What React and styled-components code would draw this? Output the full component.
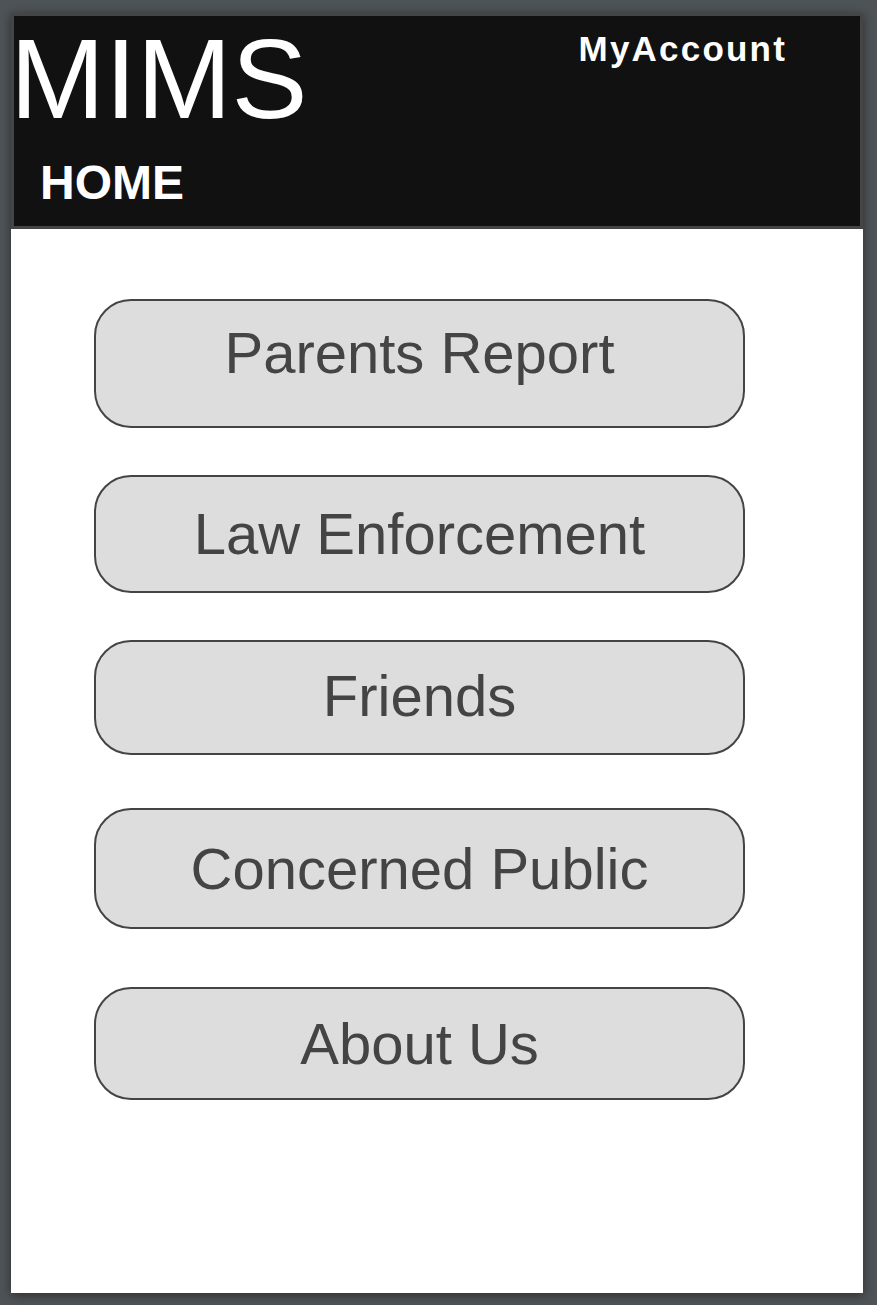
import React from 'react';
import styled, { createGlobalStyle } from 'styled-components';

const GlobalStyle = createGlobalStyle`
    html, body {
        margin: 0;
        padding: 0;
        background: #4e5357;
        min-height: 100%;
    }
    body {
        font-family: "Liberation Sans", Arial, sans-serif;
    }
`;

const menu = [
    { label: 'Parents Report', height: 129, gap: 70, lift: 22 },
    { label: 'Law Enforcement', height: 118, gap: 47 },
    { label: 'Friends', height: 115, gap: 47, lift: 4 },
    { label: 'Concerned Public', height: 121, gap: 53 },
    { label: 'About Us', height: 113, gap: 58 },
];

const App = () => {
    return (
        <>
            <GlobalStyle />
            <Screen>
                <Panel>
                    <Header>
                        <TopRow>
                            <Logo>MIMS</Logo>
                            <Account>MyAccount</Account>
                        </TopRow>
                        <PageTitle>HOME</PageTitle>
                    </Header>

                    <Menu>
                        {menu.map((item) => (
                            <MenuButton
                                key={item.label}
                                $height={item.height}
                                $gap={item.gap}
                                $lift={item.lift || 0}
                            >
                                {item.label}
                            </MenuButton>
                        ))}
                    </Menu>
                </Panel>
            </Screen>
        </>
    );
};

export default App;

const Screen = styled.div`
    width: 877px;
    height: 1305px;
    padding: 13px 0 0 11px;
    box-sizing: border-box;
`;

const Panel = styled.div`
    width: 852px;
    height: 1280px;
    background: #ffffff;
    box-shadow: 0 2px 10px rgba(0, 0, 0, 0.45);
    display: flex;
    flex-direction: column;
`;

const Header = styled.header`
    box-sizing: border-box;
    height: 216px;
    background: #111111;
    border: 3px solid #434547;
    padding: 6px 73px 0 0;
    display: flex;
    flex-direction: column;
    color: #ffffff;
`;

const TopRow = styled.div`
    display: flex;
    justify-content: space-between;
    align-items: flex-start;
`;

const Logo = styled.div`
    font-size: 114px;
    line-height: 1;
    margin-left: -4px;
    font-weight: 400;
`;

const Account = styled.div`
    font-size: 35px;
    line-height: 1;
    font-weight: 700;
    letter-spacing: 2.2px;
    margin-top: 9px;
`;

const PageTitle = styled.div`
    font-size: 48px;
    line-height: 1;
    font-weight: 700;
    margin: 23px 0 0 26px;
`;

const Menu = styled.div`
    display: flex;
    flex-direction: column;
    padding-left: 83px;
`;

const MenuButton = styled.button`
    box-sizing: border-box;
    width: 651px;
    height: ${(p) => p.$height}px;
    margin-top: ${(p) => p.$gap}px;
    padding: 0 0 ${(p) => p.$lift}px;
    background: #dddddd;
    border: 2px solid #444444;
    border-radius: 37px;
    display: flex;
    align-items: center;
    justify-content: center;
    font-family: "Liberation Sans", Arial, sans-serif;
    font-size: 58px;
    line-height: 1;
    color: #444444;
    cursor: pointer;
`;
